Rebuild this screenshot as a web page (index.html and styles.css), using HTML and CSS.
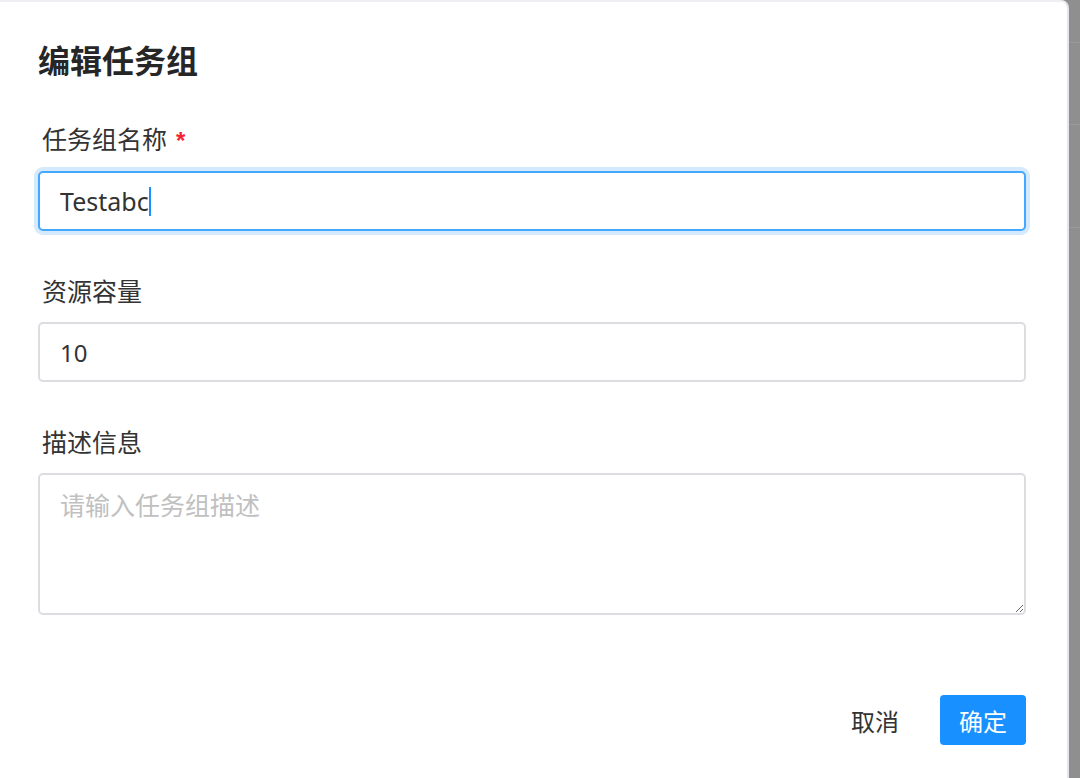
FILE: index.html
```html
<!DOCTYPE html>
<html>
  <head>
    <meta charset="utf-8">
    <link rel="stylesheet" href="styles.css">
  </head>
  <body>
    <div class="page">
      <div class="modal">
        <div class="modal-title">编辑任务组</div>

        <form class="modal-body">
          <div class="form-item">
            <label class="form-label">任务组名称 <span class="required">*</span></label>
            <div class="field field-focused">
              <span>Testabc</span><span class="caret"></span>
            </div>
          </div>

          <div class="form-item">
            <label class="form-label">资源容量</label>
            <input class="field" type="text" value="10">
          </div>

          <div class="form-item">
            <label class="form-label">描述信息</label>
            <textarea class="field field-area" placeholder="请输入任务组描述"></textarea>
          </div>
        </form>

        <div class="modal-footer">
          <button class="btn btn-text" type="button">取消</button>
          <button class="btn btn-primary" type="button">确定</button>
        </div>
      </div>

      <div class="backdrop">
        <div class="backdrop-row r1"></div>
        <div class="backdrop-row r2"></div>
        <div class="backdrop-row r3"></div>
      </div>
    </div>
  </body>
</html>
```

FILE: styles.css
```css
html, body {
  margin: 0;
  height: 100%;
}

body {
  background: #8f8f8f;
  font-family: "Liberation Sans", "Noto Sans CJK SC", sans-serif;
  color: #333;
}

.page {
  display: flex;
  height: 778px;
}

.modal {
  width: 1069px;
  box-sizing: border-box;
  background: #fff;
  border-top: 2px solid #eeeef3;
  border-right: 2px solid #e4e4ea;
  border-top-right-radius: 8px;
  padding: 38px 41px 0 38px;
  display: flex;
  flex-direction: column;
}

.modal-title {
  font-size: 32px;
  font-weight: bold;
  line-height: 44px;
  color: #262626;
  margin-bottom: 38px;
}

.form-item {
  margin-bottom: 43px;
}

.form-label {
  display: block;
  font-size: 25px;
  line-height: 36px;
  margin: 0 0 12px 4px;
}

.required {
  color: #f5222d;
  font-size: 24px;
  font-weight: bold;
  margin-left: 2px;
}

.field {
  display: flex;
  align-items: center;
  box-sizing: border-box;
  width: 100%;
  height: 60px;
  margin: 0;
  padding: 0 20px;
  border: 2px solid #dcdce1;
  border-radius: 5px;
  background: #fff;
  font-family: "Noto Sans", "Noto Sans CJK SC", sans-serif;
  font-size: 24px;
  color: #333;
  outline: none;
}

.field-focused {
  border-color: #45a8ff;
  box-shadow: 0 0 0 4px #d6eaff;
  font-size: 25px;
}

.caret {
  display: inline-block;
  width: 2px;
  height: 29px;
  background: #1890ff;
}

.field-area {
  display: block;
  height: 142px;
  padding: 13px 20px;
  resize: vertical;
  font-size: 25px;
  line-height: 34px;
}

.field-area::placeholder {
  color: #c0c0c0;
}

.modal-footer {
  display: flex;
  justify-content: flex-end;
  gap: 22px;
  margin-top: 37px;
}

.btn {
  height: 50px;
  padding: 0 19px;
  border: none;
  border-radius: 4px;
  font-family: "Noto Sans CJK SC", sans-serif;
  font-size: 24px;
  cursor: pointer;
}

.btn-text {
  background: transparent;
  color: #333;
}

.btn-primary {
  background: #1890ff;
  color: #fff;
}

.backdrop {
  flex: 1;
  display: flex;
  flex-direction: column;
}

.backdrop-row {
  border-bottom: 1px solid #999;
}

.r1 { height: 42px; }
.r2 { height: 81px; }
.r3 { height: 102px; }
```
